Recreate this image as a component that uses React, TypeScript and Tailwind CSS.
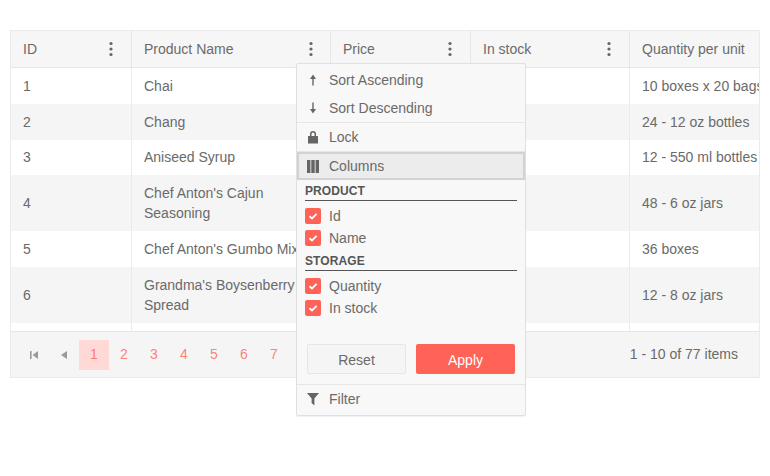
import React from "react";

const Kebab = () => (
  <svg width="16" height="16" viewBox="0 0 16 16" className="fill-[#656565]">
    <circle cx="8" cy="2.5" r="1.6" />
    <circle cx="8" cy="8" r="1.6" />
    <circle cx="8" cy="13.5" r="1.6" />
  </svg>
);

const cols = ["w-[120px]", "w-[199px]", "w-[140px]", "w-[159px]", "w-[130px]"];
const headPad = ["pr-[12px]", "pr-[11px]", "pr-[12px]", "pr-[12px]", "pr-[12px]"];

const Head = ({ label, idx, menu = true }: { label: string; idx: number; menu?: boolean }) => (
  <div className={`${cols[idx]} ${headPad[idx]} shrink-0 flex items-center justify-between pl-[12px] ${idx > 0 ? "border-l border-[#e6e6e6]" : ""} whitespace-nowrap overflow-hidden`}>
    <span>{label}</span>
    {menu && <Kebab />}
  </div>
);

const rows: { id: string; name: string[]; qty: string; tall?: boolean }[] = [
  { id: "1", name: ["Chai"], qty: "10 boxes x 20 bags" },
  { id: "2", name: ["Chang"], qty: "24 - 12 oz bottles" },
  { id: "3", name: ["Aniseed Syrup"], qty: "12 - 550 ml bottles" },
  { id: "4", name: ["Chef Anton's Cajun", "Seasoning"], qty: "48 - 6 oz jars", tall: true },
  { id: "5", name: ["Chef Anton's Gumbo Mix"], qty: "36 boxes" },
  { id: "6", name: ["Grandma's Boysenberry", "Spread"], qty: "12 - 8 oz jars", tall: true },
];

const Cell = ({ idx, children }: { idx: number; children?: React.ReactNode }) => (
  <div className={`${cols[idx]} shrink-0 flex flex-col justify-center px-[12px] leading-[20px] whitespace-nowrap overflow-hidden ${idx > 0 ? "border-l border-[#ebebeb]" : ""}`}>
    {children}
  </div>
);

const Check = ({ label }: { label: string }) => (
  <div className="flex items-center h-[22px] pl-[8px] gap-[8px]">
    <span className="w-[16px] h-[16px] rounded-[2px] bg-[#ff6358] flex items-center justify-center">
      <svg width="12" height="12" viewBox="0 0 12 12" fill="none" stroke="white" strokeWidth="1.8">
        <path d="M2.5 6.2 L5 8.4 L9.6 3.8" />
      </svg>
    </span>
    <span>{label}</span>
  </div>
);

const Group = ({ title, extra = "" }: { title: string; extra?: string }) => (
  <div className={`mx-[8px] h-[21px] border-b border-[#555] text-[12px] font-bold text-[#555] leading-[22px] tracking-[0.1px] ${extra}`}>{title}</div>
);

const Page = ({ n, active }: { n: number; active?: boolean }) => (
  <span className={`w-[30px] h-[30px] flex items-center justify-center ${active ? "bg-[#ffd9d6]" : ""}`}>{n}</span>
);

export default function App() {
  return (
    <div className="relative w-[770px] h-[476px] bg-white text-[14px] text-[#6a6a6a] font-['Liberation_Sans',Arial,sans-serif] pt-[30px] px-[10px] overflow-hidden">
      <div className="w-[750px] h-[348px] border border-[#ebebeb] flex flex-col">
        <div className="h-[37px] shrink-0 flex bg-[#f6f6f6] border-b border-[#e6e6e6]">
          <Head label="ID" idx={0} />
          <Head label="Product Name" idx={1} />
          <Head label="Price" idx={2} />
          <Head label="In stock" idx={3} />
          <Head label="Quantity per unit" idx={4} menu={false} />
        </div>
        <div className="h-[263px] shrink-0 overflow-hidden">
          {rows.map((r, i) => (
            <div key={r.id} className={`flex ${r.tall ? "h-[55.75px]" : "h-[35.75px]"} ${i % 2 ? "bg-[#f5f5f5]" : "bg-white"}`}>
              <Cell idx={0}>{r.id}</Cell>
              <Cell idx={1}>{r.name.map((t) => <div key={t}>{t}</div>)}</Cell>
              <Cell idx={2} />
              <Cell idx={3} />
              <Cell idx={4}>{r.qty}</Cell>
            </div>
          ))}
          <div className="flex h-[36px] bg-white">
            <Cell idx={0} /><Cell idx={1} /><Cell idx={2} /><Cell idx={3} /><Cell idx={4} />
          </div>
        </div>
        <div className="flex-1 bg-[#f5f5f5] border-t border-[#e6e6e6] flex items-center justify-between pl-[8px] pr-[21px]">
          <div className="flex items-center text-[#ff6358]/80">
            <span className="w-[30px] h-[30px] flex items-center justify-center">
              <svg width="10" height="10" viewBox="0 0 10 10" className="fill-[#9a9a9a]">
                <rect x="1" y="1" width="1.6" height="8" />
                <path d="M9 1 V9 L3.6 5 Z" />
              </svg>
            </span>
            <span className="w-[30px] h-[30px] flex items-center justify-center">
              <svg width="10" height="10" viewBox="0 0 10 10" className="fill-[#9a9a9a]">
                <path d="M8 1 V9 L2 5 Z" />
              </svg>
            </span>
            {[1, 2, 3, 4, 5, 6, 7].map((n) => <Page key={n} n={n} active={n === 1} />)}
          </div>
          <span>1 - 10 of 77 items</span>
        </div>
      </div>

      <div className="absolute left-[296px] top-[63px] w-[230px] h-[353px] bg-[#f8f8f8] border border-[#e0e0e0] rounded-[2px] flex flex-col shadow-[0_1px_1px_rgba(0,0,0,0.06)]">
        <div className="h-[30px] shrink-0 flex items-center pl-[11px] gap-[11px] pt-[2px]">
          <svg width="10" height="16" viewBox="0 0 10 16" className="fill-[#656565]"><path d="M5 2.5 L8 7 H5.7 V13.5 H4.3 V7 H2 Z" /></svg>
          <span>Sort Ascending</span>
        </div>
        <div className="h-[29px] shrink-0 flex items-center pl-[11px] gap-[11px] border-b border-[#e6e6e6]">
          <svg width="10" height="16" viewBox="0 0 10 16" className="fill-[#656565]"><path d="M5 13.5 L8 9 H5.7 V2.5 H4.3 V9 H2 Z" /></svg>
          <span>Sort Descending</span>
        </div>
        <div className="h-[29px] shrink-0 flex items-center pl-[10px] gap-[10px] border-b border-[#e6e6e6]">
          <svg width="12" height="14" viewBox="0 0 12 14" className="fill-[#656565]"><path fillRule="evenodd" d="M3 6 V4 a3 3 0 0 1 6 0 V6 H10.5 a.5.5 0 0 1 .5.5 V13 a.5.5 0 0 1-.5.5 H1.5 a.5.5 0 0 1-.5-.5 V6.5 a.5.5 0 0 1 .5-.5 Z M4.5 6 H7.5 V4 a1.5 1.5 0 0 0-3 0 Z" /></svg>
          <span>Lock</span>
        </div>
        <div className="h-[28px] shrink-0 flex items-center pl-[8px] gap-[10px] bg-[#ececec] border-2 border-[#d2d2d2]">
          <svg width="12" height="14" viewBox="0 0 12 14" className="fill-[#656565]"><rect x="0" y="1" width="3.4" height="13" /><rect x="4.3" y="1" width="3.4" height="13" /><rect x="8.6" y="1" width="3.4" height="13" /></svg>
          <span>Columns</span>
        </div>
        <div className="h-[204px] shrink-0 flex flex-col">
          <Group title="PRODUCT" />
          <div className="h-[4px]" />
          <Check label="Id" />
          <Check label="Name" />
          <Group title="STORAGE" extra="mt-[1px]" />
          <div className="h-[4px]" />
          <Check label="Quantity" />
          <Check label="In stock" />
          <div className="flex gap-[10px] px-[10px] mt-[25px]">
            <button className="w-[99px] h-[30px] pt-[2px] bg-[#f5f5f5] border border-[#e6e6e6] rounded-[2px] text-[#6a6a6a]">Reset</button>
            <button className="w-[99px] h-[30px] pt-[2px] bg-[#ff6358] rounded-[2px] text-white">Apply</button>
          </div>
        </div>
        <div className="flex-1 flex items-center pl-[10px] gap-[10px] pb-[2px] border-t border-[#e6e6e6]">
          <svg width="12" height="14" viewBox="0 0 12 14" className="fill-[#656565]"><path d="M0 1 H12 L7.4 6.5 V13.5 L4.6 11 V6.5 Z" /></svg>
          <span>Filter</span>
        </div>
      </div>
    </div>
  );
}
